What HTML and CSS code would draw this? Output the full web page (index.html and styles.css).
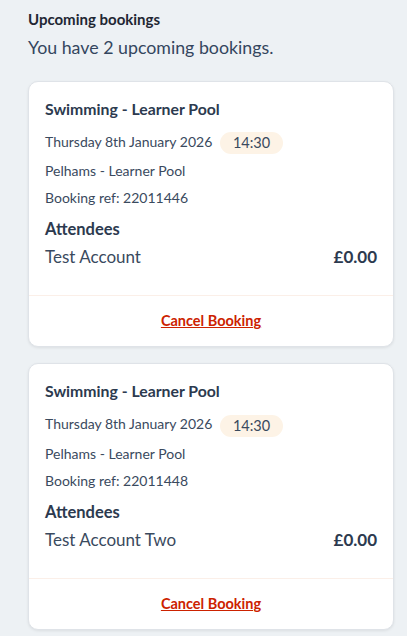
FILE: index.html
```html
<!DOCTYPE html>
<html lang="en">
<head>
<meta charset="UTF-8">
<meta name="viewport" content="width=device-width, initial-scale=1.0">
<title>Upcoming bookings</title>
<link rel="stylesheet" href="styles.css">
</head>
<body>
<div id="bookings">
    <h3>Upcoming bookings</h3>
    <p class="summary">You have 2 upcoming bookings.</p>

    <div class="card">
        <div class="card-body">
            <h4>Swimming - Learner Pool</h4>
            <div class="line date">Thursday 8th January 2026 <span class="time">14:30</span></div>
            <div class="line">Pelhams - Learner Pool</div>
            <div class="line">Booking ref: 22011446</div>
            <h5>Attendees</h5>
            <div class="attendee">
                <span>Test Account</span>
                <span class="price">£0.00</span>
            </div>
        </div>
        <div class="card-footer">
            <a href="#">Cancel Booking</a>
        </div>
    </div>

    <div class="card">
        <div class="card-body">
            <h4>Swimming - Learner Pool</h4>
            <div class="line date">Thursday 8th January 2026 <span class="time">14:30</span></div>
            <div class="line">Pelhams - Learner Pool</div>
            <div class="line">Booking ref: 22011448</div>
            <h5>Attendees</h5>
            <div class="attendee">
                <span>Test Account Two</span>
                <span class="price">£0.00</span>
            </div>
        </div>
        <div class="card-footer">
            <a href="#">Cancel Booking</a>
        </div>
    </div>
</div>
</body>
</html>
```

FILE: styles.css
```css
body {
    margin: 0;
    font-family: Lato, "Open Sans", sans-serif;
    background-color: #edf1f4;
    color: #2c3a4f;
}
#bookings {
    padding: 9px 13px 0 28px;
}
h3 {
    margin: 0;
    font-size: 15px;
    font-weight: bold;
    color: #1f2733;
    line-height: 20px;
}
.summary {
    margin: 6px 0 0;
    font-size: 17.8px;
    line-height: 24px;
    color: #34465e;
}
.card {
    background-color: #fff;
    border: 1px solid #dfe3e8;
    border-radius: 10px;
    box-shadow: 0 1px 3px rgba(0, 0, 0, 0.08);
    margin-top: 22px;
    margin-bottom: 16px;
}
.card + .card {
    margin-top: 0;
}
.card-body {
    padding: 17px 16px 27px;
}
h4 {
    margin: 0 0 12px;
    font-size: 15.8px;
    line-height: 20px;
    color: #2c3a4f;
}
.line {
    font-size: 14px;
    line-height: 22px;
    margin-bottom: 5px;
    color: #3a4a5e;
}
.line.date {
    margin-bottom: 6px;
}
.time {
    display: inline-block;
    vertical-align: middle;
    background-color: #fdf3e6;
    border-radius: 11px;
    padding: 0 13px;
    margin-left: 4px;
    font-size: 14.5px;
    line-height: 22px;
}
h5 {
    margin: 10px 0 7px;
    font-size: 16.5px;
    line-height: 20px;
    color: #2c3a4f;
}
.attendee {
    display: flex;
    justify-content: space-between;
    font-size: 17px;
    line-height: 22px;
    color: #3a4a5e;
}
.price {
    font-weight: bold;
    color: #2c3a4f;
}
.card-footer {
    border-top: 1px solid #fbefe8;
    text-align: center;
    padding: 14px 0 16px;
}
.card-footer a {
    color: #cc2200;
    font-weight: bold;
    font-size: 14.5px;
    line-height: 18px;
}
```
